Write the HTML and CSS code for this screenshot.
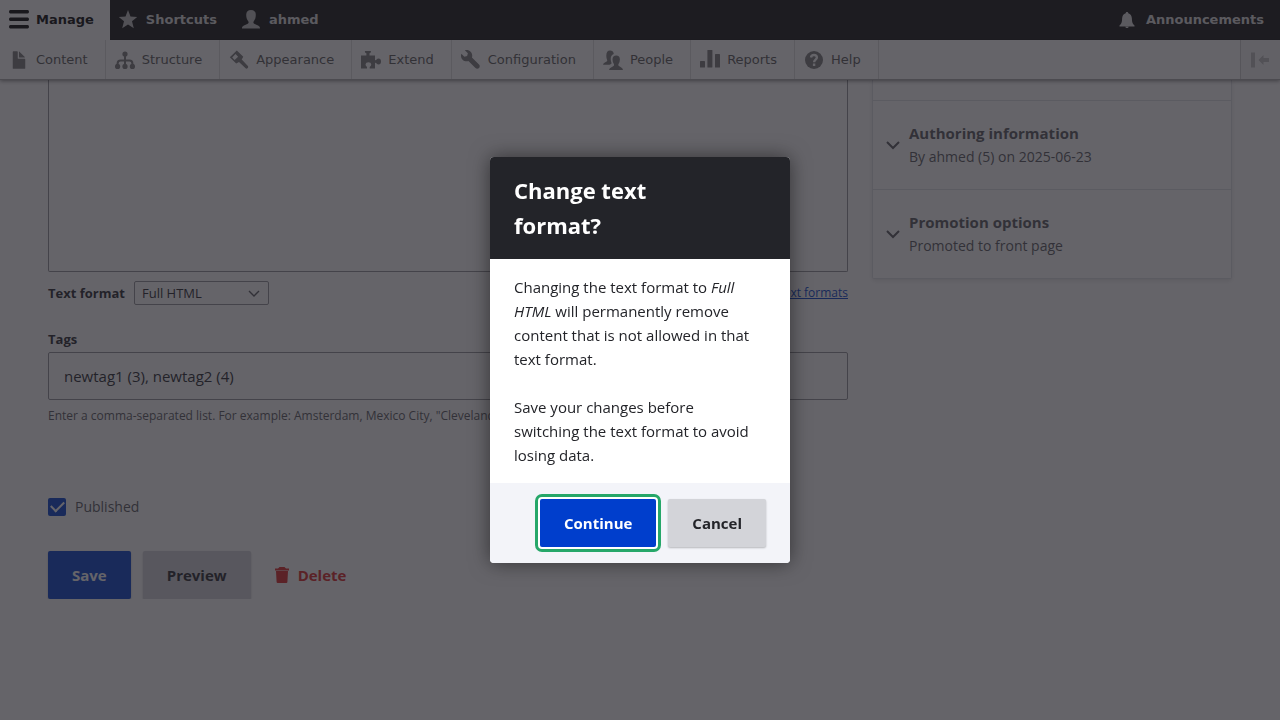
FILE: index.html
```html
<!DOCTYPE html>
<html lang="en">
<head>
<meta charset="utf-8">
<meta name="viewport" content="width=device-width, initial-scale=1">
<title>Edit content</title>
<link rel="stylesheet" href="styles.css">
</head>
<body>
<header class="toolbar">
  <nav class="toolbar-bar" aria-label="Administration">
    <a class="tab tab-active" href="#"><svg class="icon" viewBox="0 0 20 20"><path d="M1.3 0h17.4Q20 0 20 1.800t-1.300 1.800H1.300Q0 3.600 0 1.800T1.300 0zM1.300 7.500h17.400q1.300 0 1.300 1.800t-1.300 1.800H1.300Q0 11.100 0 9.300t1.300-1.800zM1.300 15h17.400q1.300 0 1.300 1.800t-1.300 1.800H1.300Q0 18.600 0 16.800T1.300 15z"/></svg>Manage</a>
    <a class="tab" href="#"><svg class="icon" viewBox="0 0 20 20"><path d="M9 0l2.500 6.500 6.700.4-5.200 4.400 1.800 7L9 14.400l-5.800 3.900 1.800-7L-.2 6.900l6.700-.4z"/></svg>Shortcuts</a>
    <a class="tab" href="#"><svg class="icon" viewBox="0 0 20 20"><path d="M0 18.500c0-2 .6-2.500 5.200-4.500 1.500-.7 1.700-1.500 1-2.700C4.800 9.500 4.200 7.500 4.200 4.800 4.200 1.800 6 0 9 0s4.800 1.800 4.800 4.800c0 2.700-.6 4.700-2 6.500-.7 1.200-.5 2 1 2.700C17.400 16 18 16.500 18 18.500z"/></svg>ahmed</a>
    <a class="tab tab-end" href="#"><svg class="icon icon-bell" viewBox="0 0 20 20"><path d="M10 2c.8 0 1.200.5 1.300 1.200 2.200.7 3.500 2.500 3.600 5.300.1 4 .7 5.300 2.600 7v.9h-15v-.9c1.900-1.700 2.500-3 2.600-7 .1-2.800 1.400-4.600 3.600-5.300C8.800 2.500 9.200 2 10 2zM8.300 16.800h3.400c-.2.900-.8 1.300-1.700 1.300s-1.500-.4-1.700-1.300z"/></svg>Announcements</a>
  </nav>
  <nav class="tray" aria-label="Administration menu">
    <a class="item" href="#"><svg class="icon" viewBox="0 0 16 16"><path d="M12.502 7h-5c-.276 0-.502-.225-.502-.5v-5c0-.275-.225-.5-.5-.5h-3c-.275 0-.5.225-.5.5v13.029c0 .275.225.5.5.5h9c.275 0 .5-.225.5-.5v-7.029c0-.275-.223-.5-.498-.5zM8.502 6h4c.275 0 .34-.159.146-.354l-4.293-4.292c-.195-.195-.353-.129-.353.146v4c0 .275.225.5.5.5z"/></svg>Content</a>
    <a class="item" href="#"><svg class="icon" viewBox="0 0 20 20"><circle cx="10" cy="4" r="2.600"/><circle cx="2.600" cy="16.400" r="2.600"/><circle cx="10" cy="16.400" r="2.600"/><circle cx="17.400" cy="16.400" r="2.600"/><path class="wire" d="M10 4v12M2.600 16v-2.500q0-3 3-3h8.800q3 0 3 3V16"/></svg>Structure</a>
    <a class="item" href="#"><svg class="icon" viewBox="0 0 20 20"><path fill-rule="evenodd" d="M7.800.4l6.500 6.300-1.600 2.700 6.200 6.700q.8 1-.2 2t-2.100.2l-6.600-6.400-2.800 1.500L.8 7.200zM6.500 4.100L3.200 7.600l2.400 2.500 3.500-3.400z"/></svg>Appearance</a>
    <a class="item" href="#"><svg class="icon" viewBox="0 0 20 20"><path d="M0 5.500h5.400V3.300Q3.900 2.800 3.900 1.700V.9h6v.8q0 1.100-1.400 1.600v2.200H14v4.700q1.100.1 1.600-.8.8-1 2-1 2.400 0 2.400 3.100 0 3-2.400 3-1.200 0-2-1-.5-.9-1.600-.8v5.900H8.700v-1.600q1.600-1.100 1.600-2.500-.2-2.200-2.900-2.300-2.700.1-2.900 2.300 0 1.400 1.500 2.500v1.600H0z"/></svg>Extend</a>
    <a class="item" href="#"><svg class="icon" viewBox="0 0 16 16"><path d="M14.416 11.586l-.01-.008v-.001l-5.656-5.656c.15-.449.252-.921.252-1.421 0-2.485-2.016-4.500-4.502-4.500-.505 0-.981.102-1.434.255l2.431 2.431-.588 2.196-2.196.588-2.445-2.445c-.162.464-.268.956-.268 1.475 0 2.486 2.014 4.500 4.500 4.500.5 0 .972-.102 1.421-.251l5.667 5.665c.781.781 2.047.781 2.828 0s.781-2.047 0-2.828z"/></svg>Configuration</a>
    <a class="item" href="#"><svg class="icon" viewBox="0 0 20 20"><path d="M0 14.800q0-1.800 2.800-2.800 1.600-.6 1.500-1.500-1-1.700-1-4.700Q3.300.6 7.100.6q3 0 3.700 3.300Q7.500 5 7.700 9.200q.1 2.300.9 4 0 .9-2.100 1.600zM6 20q.1-1.900 3.300-3.200 2.200-.9 1.800-2.200-1.600-1.900-1.600-5 0-4.200 3.700-4.200t3.700 4.200q0 3.100-1.600 5-.4 1.300 1.800 2.200 2.900 1.300 2.900 3.200z"/></svg>People</a>
    <a class="item" href="#"><svg class="icon" viewBox="0 0 20 20"><rect y="11" width="5" height="6.600" rx=".6"/><rect x="7.400" y="0" width="5" height="17.600" rx=".6"/><rect x="15" y="4" width="5" height="13.600" rx=".6"/></svg>Reports</a>
    <a class="item" href="#"><svg class="icon" viewBox="0 0 20 20"><circle cx="10" cy="10" r="9"/><path class="question" d="M7 7.500Q7.300 5 10 5t2.900 2.400c0 2.200-2.800 2.200-2.800 4.800M10.100 13.600v2.400"/></svg>Help</a>
    <button class="collapse" type="button" aria-label="Vertical orientation"><svg class="icon" viewBox="0 0 20 20"><path d="M0 2.500h4v15H0zM7.500 10l5-5v3H18v4h-5.500v3z"/></svg></button>
  </nav>
</header>

<main class="page">
  <form class="form">
    <textarea class="editor" aria-label="Body"></textarea>
    <div class="format-row">
      <label class="label" for="format">Text format</label>
      <span class="select-wrap"><select class="select" id="format"><option>Full HTML</option></select><svg class="select-arrow" viewBox="0 0 14 9"><path d="M2 2l5 5 5-5"/></svg></span>
      <a class="format-link" href="#">About text formats</a>
    </div>
    <div class="field">
      <label class="label" for="tags">Tags</label>
      <input class="text-input" id="tags" type="text" value="newtag1 (3), newtag2 (4)">
      <div class="help">Enter a comma-separated list. For example: Amsterdam, Mexico City, "Cleveland, Ohio"</div>
    </div>
    <label class="check-row" for="published"><input class="checkbox" id="published" type="checkbox" checked>Published</label>
    <div class="actions">
      <button class="button button-primary" type="button">Save</button>
      <button class="button" type="button">Preview</button>
      <a class="delete" href="#"><svg class="trash" viewBox="0 0 14 16"><path d="M0 1.500h3L4.500 0h5L11 1.500h3v1.900H0zM1 4h12l-.6 11q-.1 1-1.100 1H2.700q-1 0-1.100-1z"/></svg>Delete</a>
    </div>
  </form>
  <aside class="sidebar">
    <div class="section section-cut"></div>
    <div class="section">
      <svg class="chevron" viewBox="0 0 16 16"><path d="M2 5l6 6 6-6"/></svg>
      <div><h2 class="section-title">Authoring information</h2><p class="summary">By ahmed (5) on 2025-06-23</p></div>
    </div>
    <div class="section">
      <svg class="chevron" viewBox="0 0 16 16"><path d="M2 5l6 6 6-6"/></svg>
      <div><h2 class="section-title">Promotion options</h2><p class="summary">Promoted to front page</p></div>
    </div>
  </aside>
</main>

<div class="overlay">
  <div class="dialog" role="dialog" aria-modal="true" aria-labelledby="dialog-title">
    <div class="dialog-head"><h1 class="dialog-title" id="dialog-title">Change text format?</h1></div>
    <div class="dialog-body">
      <p class="dialog-text">Changing the text format to <em>Full HTML</em> will permanently remove content that is not allowed in that text format.</p>
      <p class="dialog-text">Save your changes before switching the text format to avoid losing data.</p>
    </div>
    <div class="dialog-foot">
      <button class="button button-primary button-focus" type="button">Continue</button>
      <button class="button" type="button">Cancel</button>
    </div>
  </div>
</div>
</body>
</html>
```

FILE: styles.css
```css
* { box-sizing: border-box; }

body {
  margin: 0;
  background: #fff;
  color: #232429;
  font: 15px/24px "Segoe UI", "Open Sans", sans-serif;
}

h1, h2, p { margin: 0; }

/* Toolbar */
.toolbar {
  position: relative;
  font: 13px/20px "DejaVu Sans", sans-serif;
}
.toolbar-bar {
  display: flex;
  height: 40px;
  background: #0f0f0f;
}
.tab {
  display: flex;
  align-items: center;
  gap: 7px;
  padding: 0 16px 0 9px;
  color: #ddd;
  font-weight: bold;
  text-decoration: none;
}
.tab-active {
  background: #fff;
  color: #000;
}
.tab-end {
  gap: 9px;
  margin-left: auto;
}
.icon {
  flex: none;
  width: 20px;
  height: 20px;
  fill: currentColor;
}
.tab .icon {
  overflow: visible;
  fill: #bebebe;
}
.tab-active .icon { fill: #000; }
.tab .icon-bell { fill: #ddd; }
.tray {
  display: flex;
  height: 40px;
  background: #fff;
  border-bottom: 1px solid #aaa;
  box-shadow: 0 1px 4px rgba(0, 0, 0, 0.5);
}
.item {
  display: flex;
  align-items: center;
  gap: 7px;
  padding: 0 17px 0 9px;
  border-right: 1px solid #ddd;
  color: #565656;
  text-decoration: none;
}
.item .icon { fill: #787878; }
.item .wire {
  fill: none;
  stroke: #787878;
  stroke-width: 2;
}
.item .question {
  fill: none;
  stroke: #fff;
  stroke-width: 2.4;
}
.collapse {
  display: flex;
  align-items: center;
  margin-left: auto;
  padding: 0 9px 0 10px;
  border: 0;
  border-left: 1px solid #ccc;
  background: #f5f5f5;
  color: #bebebe;
}

/* Page */
.page {
  display: grid;
  grid-template-columns: minmax(0, 1fr) 360px;
  align-items: start;
  gap: 24px;
  padding: 0 48px;
}
.editor {
  display: block;
  width: 100%;
  height: 192px;
  border: 1px solid #919297;
  border-top: 0;
  border-radius: 0 0 2px 2px;
  background: #fff;
  resize: none;
}
.format-row {
  display: flex;
  align-items: center;
  gap: 9px;
  margin-top: 9px;
  margin-bottom: 22px;
}
.label {
  font-size: 13px;
  font-weight: bold;
}
.select-wrap {
  display: grid;
  align-items: center;
  justify-items: end;
}
.select {
  grid-area: 1 / 1;
  width: 135px;
  height: 24px;
  padding: 0 7px;
  appearance: none;
  border: 1px solid #919297;
  border-radius: 2px;
  background: #fff;
  color: #232429;
  font: 13px/20px "Segoe UI", "Open Sans", sans-serif;
}
.select-arrow {
  grid-area: 1 / 1;
  width: 14px;
  height: 9px;
  margin-right: 8px;
  fill: none;
  stroke: #55565b;
  stroke-width: 1.4;
  pointer-events: none;
}
.format-link {
  margin-left: auto;
  color: #003ecc;
  font-size: 12px;
}
.field {
  display: flex;
  flex-direction: column;
}
.field .label {
  margin-bottom: 1px;
}
.text-input {
  height: 48px;
  padding: 0 15px;
  border: 1px solid #919297;
  border-radius: 2px;
  background: #fff;
  color: #232429;
  font: inherit;
}
.help {
  margin-top: 4px;
  color: #55565b;
  font-size: 12px;
}
.check-row {
  display: flex;
  align-items: center;
  gap: 9px;
  width: max-content;
  margin-top: 67px;
  color: #55565b;
  font-size: 14px;
}
.checkbox {
  display: grid;
  place-items: center;
  width: 18px;
  height: 18px;
  margin: 0;
  appearance: none;
  border-radius: 2px;
  background: #003ecc;
}
.checkbox::before {
  content: "";
  width: 11px;
  height: 6px;
  margin-bottom: 4px;
  border: solid #fff;
  border-width: 0 0 2px 2px;
  transform: rotate(-45deg);
}
.actions {
  display: flex;
  align-items: center;
  gap: 12px;
  margin-top: 32px;
}
.button {
  height: 48px;
  padding: 0 24px;
  border: 0;
  border-radius: 2px;
  background: #d3d4d9;
  box-shadow: 0 1px 2px rgba(0, 0, 0, 0.25);
  color: #232429;
  font: bold 15px/24px "Segoe UI", "Open Sans", sans-serif;
}
.button-primary {
  background: #003ecc;
  color: #fff;
}
.delete {
  display: flex;
  align-items: center;
  gap: 9px;
  margin-left: 12px;
  color: #dc2323;
  font-weight: bold;
  text-decoration: none;
}
.trash {
  width: 14px;
  height: 16px;
  fill: currentColor;
}

/* Sidebar */
.sidebar {
  border: 1px solid #dedfe4;
  border-top: 0;
  border-radius: 0 0 2px 2px;
  box-shadow: 0 2px 4px rgba(0, 0, 0, 0.1);
}
.section {
  display: flex;
  align-items: center;
  gap: 8px;
  height: 89px;
  padding: 0 12px;
  border-top: 1px solid #dedfe4;
  color: #55565b;
}
.section-cut {
  height: 20px;
  border-top: 0;
}
.section-title {
  font-size: 15px;
  line-height: 24px;
}
.summary {
  font-size: 14px;
  line-height: 24px;
}
.chevron {
  width: 16px;
  height: 16px;
  fill: none;
  stroke: #55565b;
  stroke-width: 2;
}

/* Dialog */
.overlay {
  position: fixed;
  inset: 0;
  display: flex;
  align-items: center;
  justify-content: center;
  background: rgba(35, 34, 41, 0.7);
}
.dialog {
  width: 300px;
  border-radius: 4px;
  overflow: hidden;
  background: #fff;
  box-shadow: 0 0 20px rgba(0, 0, 0, 0.5);
}
.dialog-head {
  padding: 16px 72px 16px 24px;
  background: #232429;
  color: #fff;
}
.dialog-title {
  font-size: 22px;
  line-height: 35px;
}
.dialog-body {
  display: flex;
  flex-direction: column;
  gap: 24px;
  padding: 16px 32px 16px 24px;
}
.dialog-foot {
  display: flex;
  justify-content: flex-end;
  gap: 12px;
  padding: 16px 24px;
  background: #f3f4f9;
}
.button-focus {
  outline: 3px solid #26a769;
  outline-offset: 2px;
  box-shadow: 0 0 0 2px #fff;
}
```
